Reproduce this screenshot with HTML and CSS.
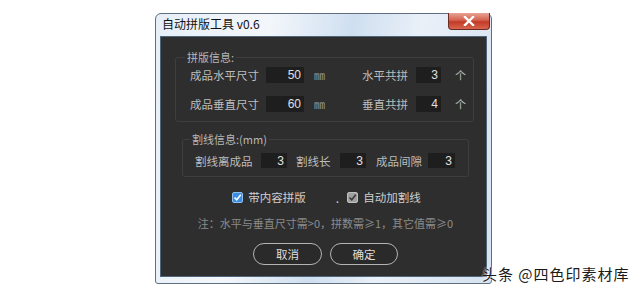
FILE: index.html
```html
<!DOCTYPE html>
<html lang="zh-CN">
<head>
<meta charset="UTF-8">
<title>自动拼版工具 v0.6</title>
<link rel="stylesheet" href="styles.css">
</head>
<body>

<div class="window">
    <div class="titlebar">
        <span class="title">自动拼版工具 v0.6</span>
        <div class="close">
            <svg width="12" height="10" viewBox="0 0 12 10"><path d="M2 1 L10 9 M10 1 L2 9" stroke="#fff" stroke-width="2.4" stroke-linecap="square"/></svg>
        </div>
    </div>

    <div class="content">
        <fieldset class="group group-size">
            <legend>拼版信息:</legend>
            <div class="grid">
                <span class="label">成品水平尺寸</span>
                <input class="field" value="50" readonly>
                <span class="unit">㎜</span>
                <span class="label">水平共拼</span>
                <input class="field" value="3" readonly>
                <span class="unit unit-count">个</span>

                <span class="label">成品垂直尺寸</span>
                <input class="field" value="60" readonly>
                <span class="unit">㎜</span>
                <span class="label">垂直共拼</span>
                <input class="field" value="4" readonly>
                <span class="unit unit-count">个</span>
            </div>
        </fieldset>

        <fieldset class="group group-cut">
            <legend>割线信息:(mm)</legend>
            <div class="row">
                <span class="label l-a">割线离成品</span>
                <input class="field f-small" value="3" readonly>
                <span class="label l-b">割线长</span>
                <input class="field f-small" value="3" readonly>
                <span class="label l-c">成品间隙</span>
                <input class="field f-small f-last" value="3" readonly>
            </div>
        </fieldset>

        <div class="options">
            <span class="check check-on">
                <svg width="9" height="9" viewBox="0 0 9 9"><path d="M1.5 4.5 L3.7 6.8 L7.8 1.8" fill="none" stroke="#fff" stroke-width="1.6"/></svg>
            </span>
            <span class="opt-text">带内容拼版</span>
            <span class="dot">.</span>
            <span class="check check-gray">
                <svg width="9" height="9" viewBox="0 0 9 9"><path d="M1.5 4.5 L3.7 6.8 L7.8 1.8" fill="none" stroke="#3a3a3a" stroke-width="1.6"/></svg>
            </span>
            <span class="opt-text">自动加割线</span>
        </div>

        <div class="note">注：水平与垂直尺寸需&gt;0，拼数需≥1，其它值需≥0</div>

        <div class="buttons">
            <button class="btn btn-cancel">取消</button>
            <button class="btn btn-ok">确定</button>
        </div>
    </div>
</div>

<div class="watermark">头条 @四色印素材库</div>

</body>
</html>
```

FILE: styles.css
```css
body {
    margin: 0;
    width: 640px;
    height: 295px;
    background-color: #fff;
    font-family: "Noto Sans CJK SC", "Liberation Sans", sans-serif;
    position: relative;
    overflow: hidden;
}

.window {
    margin: 13px 0 0 155px;
    width: 337px;
    height: 271px;
    box-sizing: border-box;
    border: 1px solid #5f6e80;
    border-radius: 6px 6px 3px 3px;
    background: linear-gradient(100deg, #e6eef7 0%, #f3f7fb 30%, #cfdff0 52%, #e9f0f8 70%, #d5e2f0 100%);
    display: flex;
    flex-direction: column;
}

.titlebar {
    height: 22px;
    display: flex;
    justify-content: space-between;
    align-items: flex-start;
}

.title {
    padding: 2px 0 0 6px;
    font-size: 12px;
    line-height: 16px;
    color: #111;
}

.close {
    width: 40px;
    height: 16px;
    margin: -1px 1px 0 0;
    border: 1px solid #6b2a22;
    border-top: none;
    border-radius: 0 0 4px 4px;
    background: linear-gradient(180deg, #e8a394 0%, #d4614f 45%, #c23a26 55%, #d8654f 100%);
    display: flex;
    justify-content: center;
    align-items: center;
}

.content {
    margin: 0 4px 6px 4px;
    flex: 1;
    background-color: #2e2e2e;
    border: 1px solid #50647a;
    box-sizing: border-box;
    overflow: hidden;
}

.group {
    border: 1px solid #3e3e3e;
    border-radius: 3px;
    margin: 0;
    min-width: 0;
}

.group legend {
    font-size: 11px;
    line-height: 15px;
    color: #b8b8b8;
    padding: 0 2px;
    margin-left: -5px;
}

.group-size {
    margin: 13px 12px 0 14px;
    padding: 2px 0 9px 14px;
}

.grid {
    display: grid;
    grid-template-columns: 76px 38px 58px 54px 25px auto;
    grid-template-rows: 16px 16px;
    row-gap: 13px;
    align-items: center;
}

.label {
    font-size: 11.5px;
    line-height: 16px;
    color: #bdbdbd;
}

.field {
    box-sizing: border-box;
    height: 16px;
    width: 100%;
    border: none;
    outline: none;
    background-color: #1e1e1e;
    color: #e0e0e0;
    font-family: "Liberation Sans", Arial, sans-serif;
    font-size: 12px;
    text-align: right;
    padding: 0 3px 0 0;
}

.unit {
    font-size: 11px;
    color: #9a9a9a;
    padding-left: 10px;
}

.unit-count {
    padding-left: 14px;
    color: #bdbdbd;
}

.group-cut {
    margin: 10px 17px 0 21px;
    padding: 6px 0 8px 12px;
}

.row {
    display: flex;
    align-items: center;
    height: 15px;
}

.row .field {
    height: 15px;
}

.l-a { width: 66px; }
.l-b { width: 44px; margin-left: 9px; }
.l-c { width: 52px; margin-left: 10px; }
.f-small { width: 26px; }
.f-last { width: 27px; }

.options {
    margin-top: 13px;
    display: flex;
    justify-content: center;
    align-items: center;
    padding-left: 6px;
    height: 14px;
}

.check {
    width: 11px;
    height: 11px;
    box-sizing: border-box;
    border-radius: 2px;
    display: flex;
    justify-content: center;
    align-items: center;
}

.check-on {
    background-color: #3b8de0;
    border: 1px solid #8cc0f2;
}

.check-gray {
    background-color: #a0a0a0;
    border: 1px solid #c0c0c0;
}

.opt-text {
    font-size: 11.5px;
    color: #cfcfcf;
    margin-left: 5px;
}

.dot {
    color: #cfcfcf;
    font-size: 12px;
    margin: 0 8px 0 30px;
}

.note {
    margin-top: 12px;
    text-align: center;
    padding-left: 4px;
    font-size: 11px;
    line-height: 14px;
    color: #8c8c8c;
}

.buttons {
    margin-top: 13px;
    display: flex;
    justify-content: center;
    gap: 8px;
    padding-left: 4px;
}

.btn {
    height: 22px;
    background-color: #2a2a2a;
    border: 1.5px solid #b4b4b4;
    border-radius: 11px;
    color: #dedede;
    font-family: "Noto Sans CJK SC", sans-serif;
    font-size: 11.5px;
    padding: 0;
}

.btn-cancel { width: 69px; }
.btn-ok { width: 68px; }

.watermark {
    position: absolute;
    left: 482px;
    top: 264px;
    white-space: nowrap;
    font-size: 15px;
    line-height: 20px;
    letter-spacing: 1px;
    color: #1a1a1a;
    text-shadow: 0 0 2px #fff, 0 0 2px #fff;
}
```
